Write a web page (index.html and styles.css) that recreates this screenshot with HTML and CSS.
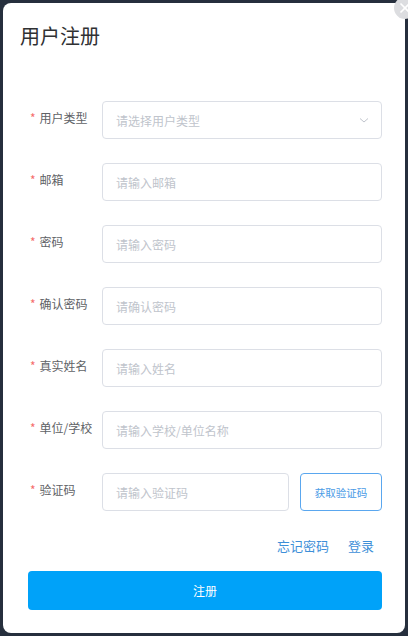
FILE: index.html
```html
<!DOCTYPE html>
<html lang="zh">
<head>
<meta charset="utf-8">
<link rel="stylesheet" href="styles.css">
</head>
<body>
<div class="dialog">
  <button class="close" aria-label="关闭">
    <svg width="22" height="22" viewBox="0 0 22 22"><path d="M6.5 6.5 L15.5 15.5 M15.5 6.5 L6.5 15.5" stroke="#fff" stroke-width="1.6" fill="none"/></svg>
  </button>
  <h1 class="title">用户注册</h1>
  <form class="form">
    <div class="row">
      <label class="label"><span class="req">*</span>用户类型</label>
      <div class="field select">
        <span class="ph">请选择用户类型</span>
        <svg class="arrow" width="12" height="12" viewBox="0 0 12 12"><path d="M2 4.5 L6 8 L10 4.5" stroke="#c0c4cc" stroke-width="1" fill="none"/></svg>
      </div>
    </div>
    <div class="row">
      <label class="label"><span class="req">*</span>邮箱</label>
      <div class="field"><span class="ph">请输入邮箱</span></div>
    </div>
    <div class="row">
      <label class="label"><span class="req">*</span>密码</label>
      <div class="field"><span class="ph">请输入密码</span></div>
    </div>
    <div class="row">
      <label class="label"><span class="req">*</span>确认密码</label>
      <div class="field"><span class="ph">请确认密码</span></div>
    </div>
    <div class="row">
      <label class="label"><span class="req">*</span>真实姓名</label>
      <div class="field"><span class="ph">请输入姓名</span></div>
    </div>
    <div class="row">
      <label class="label"><span class="req">*</span>单位/学校</label>
      <div class="field"><span class="ph">请输入学校/单位名称</span></div>
    </div>
    <div class="row">
      <label class="label"><span class="req">*</span>验证码</label>
      <div class="field code"><span class="ph">请输入验证码</span></div>
      <button type="button" class="code-btn">获取验证码</button>
    </div>
    <div class="links">
      <a class="link">忘记密码</a>
      <a class="link">登录</a>
    </div>
    <button type="button" class="submit">注册</button>
  </form>
</div>
</body>
</html>
```

FILE: styles.css
```css
* { box-sizing: border-box; }
html, body { margin: 0; padding: 0; }
body {
  background: #262f3d;
  width: 408px;
  height: 636px;
  overflow: hidden;
  font-family: "Noto Sans CJK SC", "Noto Sans", sans-serif;
  padding: 3px 0 0 3px;
}
.dialog {
  position: relative;
  width: 402px;
  height: 630px;
  background: #fff;
  border-radius: 8px;
  padding: 20px 0 0 17px;
}
.close {
  position: absolute;
  top: -6px;
  right: -11px;
  width: 22px;
  height: 22px;
  border-radius: 50%;
  border: 0;
  padding: 0;
  background: #dcdde0;
  display: flex;
}
.title {
  margin: 0;
  font-size: 20px;
  line-height: 26px;
  font-weight: 400;
  color: #303133;
}
.form {
  margin-top: 52px;
  padding-left: 8px;
  width: 362px;
  display: flex;
  flex-direction: column;
}
.row {
  display: flex;
  align-items: center;
  height: 38px;
  margin-bottom: 24px;
}
.label {
  width: 74px;
  flex: none;
  font-size: 12px;
  color: #606266;
  margin-top: -6px;
  padding-left: 2px;
}
.req {
  color: #f56c6c;
  margin-right: 4px;
}
.field {
  flex: 1;
  height: 38px;
  border: 1px solid #dcdfe6;
  border-radius: 4px;
  display: flex;
  align-items: center;
  padding: 0 13px;
}
.field.code { flex: none; width: 187px; }
.ph { font-size: 12px; color: #c0c4cc; }
.select { justify-content: space-between; }
.arrow { margin-right: -2px; }
.code-btn {
  margin-left: 11px;
  width: 82px;
  height: 38px;
  border: 1px solid #5aa7ef;
  border-radius: 4px;
  background: #fff;
  color: #4a9be6;
  font-family: inherit;
  font-size: 10.5px;
  padding: 0;
}
.links {
  display: flex;
  justify-content: flex-end;
  gap: 19px;
  margin-top: 1px;
  padding-right: 8px;
  height: 20px;
}
.link {
  font-size: 13px;
  line-height: 20px;
  color: #3d8fd8;
}
.submit {
  margin-top: 15px;
  height: 39px;
  border: 0;
  border-radius: 4px;
  background: #00a2f9;
  color: #fff;
  font-family: inherit;
  font-size: 12px;
}
```
